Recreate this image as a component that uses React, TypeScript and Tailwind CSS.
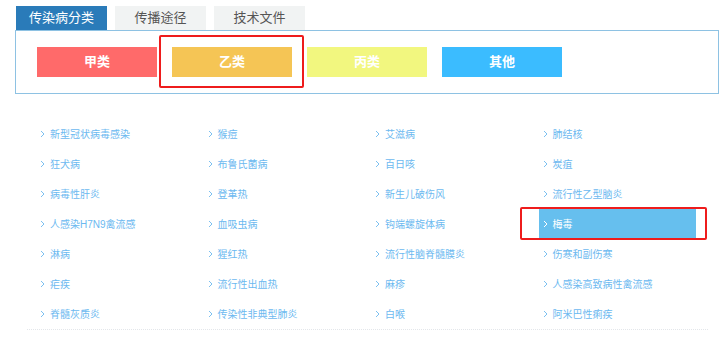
const font = { fontFamily: '"Liberation Sans", "Noto Sans CJK SC", sans-serif' }

const tabs = ['传染病分类', '传播途径', '技术文件']

const categories = [
  { name: '甲类', color: 'bg-[#ff6a6a]' },
  { name: '乙类', color: 'bg-[#f5c555]', active: true },
  { name: '丙类', color: 'bg-[#f2f77f]' },
  { name: '其他', color: 'bg-[#3bbcff]' },
]

const diseases = [
  '新型冠状病毒感染', '猴痘', '艾滋病', '肺结核',
  '狂犬病', '布鲁氏菌病', '百日咳', '炭疽',
  '病毒性肝炎', '登革热', '新生儿破伤风', '流行性乙型脑炎',
  '人感染H7N9禽流感', '血吸虫病', '钩端螺旋体病', '梅毒',
  '淋病', '猩红热', '流行性脑脊髓膜炎', '伤寒和副伤寒',
  '疟疾', '流行性出血热', '麻疹', '人感染高致病性禽流感',
  '脊髓灰质炎', '传染性非典型肺炎', '白喉', '阿米巴性痢疾',
]

function Chevron({ white }: { white?: boolean }) {
  return (
    <svg width="5" height="8" viewBox="0 0 5 8" className="shrink-0">
      <polyline
        points="1,1 4,4 1,7"
        fill="none"
        stroke={white ? '#ffffff' : '#7cc0f0'}
        strokeWidth="1"
      />
    </svg>
  )
}

export default function App() {
  return (
    <div className="w-[720px] h-[359px] bg-white overflow-hidden" style={font}>
      {/* tabs */}
      <div className="flex gap-[8px] pt-[6px] pl-[16px]">
        {tabs.map((t, i) => (
          <div
            key={t}
            className={
              i === 0
                ? 'w-[91px] h-[24px] flex items-center justify-center text-[13px] text-white bg-[#2a7bb9]'
                : 'w-[91px] h-[24px] flex items-center justify-center text-[13px] text-[#555] bg-[#f1f3f3]'
            }
          >
            {t}
          </div>
        ))}
      </div>

      {/* category panel */}
      <div className="ml-[15px] w-[704px] h-[64px] border border-[#8ec2e3] flex items-start gap-[15px] pl-[21px] pt-[16px]">
        {categories.map((c) => (
          <div key={c.name} className="relative">
            <div
              className={`w-[120px] h-[30px] flex items-center justify-center text-[13px] font-bold text-white ${c.color}`}
            >
              {c.name}
            </div>
            {c.active && (
              <div className="absolute left-[-13px] right-[-12px] top-[-12px] bottom-[-11px] border-2 border-[#ee1c1c] rounded-[2px]" />
            )}
          </div>
        ))}
      </div>

      {/* disease list */}
      <div className="mt-[25px] ml-[27px] w-[681px] pl-[9px] border-b border-dotted border-[#e3e6ea]">
        <div className="grid grid-cols-[repeat(4,167.5px)]">
          {diseases.map((d) => {
            const hl = d === '梅毒'
            return (
              <div key={d} className="relative h-[30px]">
                <div
                  className={
                    hl
                      ? 'w-[157px] h-[30px] flex items-center gap-[5px] pl-[4px] bg-[#66bfee] text-white text-[10px]'
                      : 'w-[157px] h-[30px] flex items-center gap-[5px] pl-[4px] text-[#6cb9f0] text-[10px]'
                  }
                >
                  <Chevron white={hl} />
                  <span>{d}</span>
                </div>
                {hl && (
                  <div className="absolute left-[-19px] top-[-2px] w-[187px] h-[33px] border-2 border-[#ee1c1c] rounded-[2px]" />
                )}
              </div>
            )
          })}
        </div>
      </div>
    </div>
  )
}
